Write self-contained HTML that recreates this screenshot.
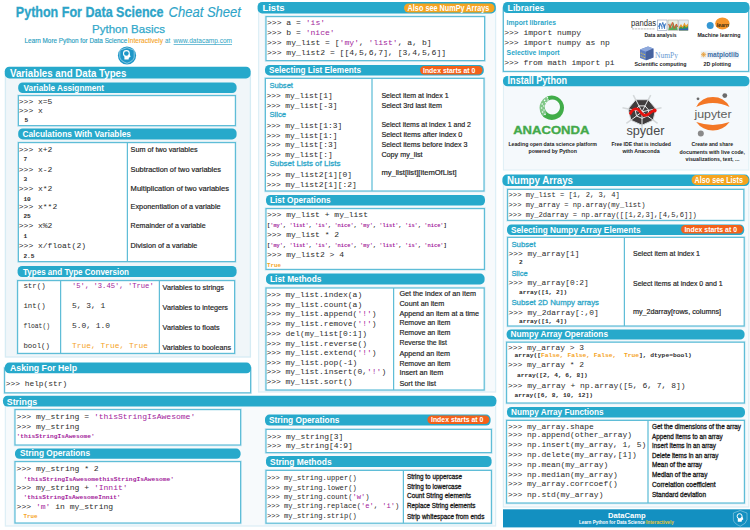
<!DOCTYPE html>
<html lang="en"><head><meta charset="utf-8"><title>Python For Data Science Cheat Sheet - Python Basics</title>
<style>
html,body{margin:0;padding:0;background:#fff;}
body{width:750px;height:530px;overflow:hidden;}
svg{display:block;font-family:"Liberation Sans",Arial,sans-serif;}
svg text{white-space:pre;}
svg .m{font-family:"Liberation Mono","Courier New",monospace;}
</style></head><body>
<svg width="750" height="530" viewBox="0 0 750 530">
<text x="15.8" y="17.2" font-size="15.3" fill="#2da4c8" font-weight="bold" textLength="147.7" lengthAdjust="spacingAndGlyphs" stroke="#2da4c8" stroke-width="0.3">Python For Data Science</text>
<text x="168.5" y="17.2" font-size="15.3" fill="#2da4c8" font-style="italic" textLength="72.5" lengthAdjust="spacingAndGlyphs" stroke="#2da4c8" stroke-width="0.15">Cheat Sheet</text>
<text x="92.0" y="32.7" font-size="11.6" fill="#32a8ca" textLength="73.0" lengthAdjust="spacingAndGlyphs" stroke="#32a8ca" stroke-width="0.25">Python Basics</text>
<text x="24.6" y="43.0" font-size="6.6" fill="#2b9fc2" textLength="102.6" lengthAdjust="spacingAndGlyphs" stroke="#2b9fc2" stroke-width="0.15">Learn More Python for Data Science</text>
<text x="128.0" y="43.0" font-size="6.6" fill="#f5a41f" textLength="35.0" lengthAdjust="spacingAndGlyphs" stroke="#f5a41f" stroke-width="0.1">Interactively</text>
<text x="165.0" y="43.0" font-size="6.6" fill="#2b9fc2" textLength="5.2" lengthAdjust="spacingAndGlyphs">at</text>
<text x="173.6" y="43.0" font-size="6.6" fill="#2b9fc2" textLength="58.4" lengthAdjust="spacingAndGlyphs" text-decoration="underline">www.datacamp.com</text>
<g id="dcicon"><circle cx="127" cy="55.5" r="9.1" fill="#1d97c8"/><path d="M119.8 50.2 L127 47.7 L134.2 50.2 V57.2 Q133.8 61 127 63.3 Q120.2 61 119.8 57.2 Z" fill="none" stroke="#fff" stroke-opacity="0.8" stroke-width="0.6"/><circle cx="126.4" cy="53.5" r="2.9" fill="none" stroke="#fff" stroke-width="1.1"/><path d="M124.4 55.8 L124.4 59.6 L128.6 59.6 L128.9 57.8 L130.6 56.8 L129.4 53.6 L127.6 56.6 Z" fill="#fff"/></g>
<rect x="5.4" y="72.0" width="245.0" height="285.0" fill="#f0f6f9" stroke="#d6ecf4" stroke-width="1.3"/>
<rect x="4.8" y="66.8" width="245.8" height="11.6" fill="#27a9cb" rx="4.5"/>
<text x="10.0" y="76.5" font-size="10.607999999999999" fill="#ffffff" font-weight="bold" textLength="116.4" lengthAdjust="spacingAndGlyphs">Variables and Data Types</text>
<rect x="18.2" y="82.4" width="218.4" height="10.6" fill="#27a9cb" rx="4.5"/>
<text x="23.6" y="90.8" font-size="9.256" fill="#ffffff" font-weight="bold" textLength="80.4" lengthAdjust="spacingAndGlyphs">Variable Assignment</text>
<rect x="18.4" y="95.6" width="217.0" height="30.0" fill="#ffffff" stroke="#d3ecf4" stroke-width="2.6"/>
<rect x="18.4" y="95.6" width="217.0" height="30.0" fill="#ffffff" stroke="#5fbdd7" stroke-width="1.2"/>
<text x="18.8" y="103.5" font-size="8.0" fill="#2b2b2b" class="m" textLength="33.6" lengthAdjust="spacingAndGlyphs">&gt;&gt;&gt; x=5</text>
<text x="18.8" y="112.9" font-size="8.0" fill="#2b2b2b" class="m" textLength="24.0" lengthAdjust="spacingAndGlyphs">&gt;&gt;&gt; x</text>
<text x="24.4" y="122.3" font-size="6.2" fill="#2b2b2b" class="m" font-weight="bold" textLength="3.7" lengthAdjust="spacingAndGlyphs">5</text>
<rect x="18.2" y="128.4" width="218.4" height="11.0" fill="#27a9cb" rx="4.5"/>
<text x="22.4" y="136.8" font-size="9.256" fill="#ffffff" font-weight="bold" textLength="108.6" lengthAdjust="spacingAndGlyphs">Calculations With Variables</text>
<rect x="18.4" y="142.6" width="217.0" height="119.0" fill="#ffffff" stroke="#d3ecf4" stroke-width="2.6"/>
<rect x="18.4" y="142.6" width="217.0" height="119.0" fill="#ffffff" stroke="#5fbdd7" stroke-width="1.2"/>
<line x1="127.4" y1="142.6" x2="127.4" y2="261.6" stroke="#5fbdd7" stroke-width="1.25"/>
<text x="18.8" y="151.7" font-size="8.0" fill="#2b2b2b" class="m" textLength="33.6" lengthAdjust="spacingAndGlyphs">&gt;&gt;&gt; x+2</text>
<text x="23.4" y="161.3" font-size="6.2" fill="#2b2b2b" class="m" font-weight="bold" textLength="3.7" lengthAdjust="spacingAndGlyphs">7</text>
<text x="130.6" y="151.8" font-size="7.3" fill="#1d1d1d" textLength="67.0" lengthAdjust="spacingAndGlyphs" stroke="#1d1d1d" stroke-width="0.18">Sum of two variables</text>
<text x="18.8" y="171.7" font-size="8.0" fill="#2b2b2b" class="m" textLength="33.6" lengthAdjust="spacingAndGlyphs">&gt;&gt;&gt; x-2</text>
<text x="23.4" y="181.3" font-size="6.2" fill="#2b2b2b" class="m" font-weight="bold" textLength="3.7" lengthAdjust="spacingAndGlyphs">3</text>
<text x="130.6" y="171.8" font-size="7.3" fill="#1d1d1d" textLength="90.4" lengthAdjust="spacingAndGlyphs" stroke="#1d1d1d" stroke-width="0.18">Subtraction of two variables</text>
<text x="18.8" y="191.3" font-size="8.0" fill="#2b2b2b" class="m" textLength="33.6" lengthAdjust="spacingAndGlyphs">&gt;&gt;&gt; x*2</text>
<text x="23.4" y="200.9" font-size="6.2" fill="#2b2b2b" class="m" font-weight="bold" textLength="7.4" lengthAdjust="spacingAndGlyphs">10</text>
<text x="130.6" y="191.4" font-size="7.3" fill="#1d1d1d" textLength="98.4" lengthAdjust="spacingAndGlyphs" stroke="#1d1d1d" stroke-width="0.18">Multiplication of two variables</text>
<text x="18.8" y="208.9" font-size="8.0" fill="#2b2b2b" class="m" textLength="38.4" lengthAdjust="spacingAndGlyphs">&gt;&gt;&gt; x**2</text>
<text x="23.4" y="218.3" font-size="6.2" fill="#2b2b2b" class="m" font-weight="bold" textLength="7.4" lengthAdjust="spacingAndGlyphs">25</text>
<text x="130.6" y="208.5" font-size="7.3" fill="#1d1d1d" textLength="90.0" lengthAdjust="spacingAndGlyphs" stroke="#1d1d1d" stroke-width="0.18">Exponentiation of a variable</text>
<text x="18.8" y="228.1" font-size="8.0" fill="#2b2b2b" class="m" textLength="33.6" lengthAdjust="spacingAndGlyphs">&gt;&gt;&gt; x%2</text>
<text x="23.4" y="237.9" font-size="6.2" fill="#2b2b2b" class="m" font-weight="bold" textLength="3.7" lengthAdjust="spacingAndGlyphs">1</text>
<text x="130.6" y="227.7" font-size="7.3" fill="#1d1d1d" textLength="75.0" lengthAdjust="spacingAndGlyphs" stroke="#1d1d1d" stroke-width="0.18">Remainder of a variable</text>
<text x="18.8" y="248.3" font-size="8.0" fill="#2b2b2b" class="m" textLength="67.2" lengthAdjust="spacingAndGlyphs">&gt;&gt;&gt; x/float(2)</text>
<text x="23.4" y="257.9" font-size="6.2" fill="#2b2b2b" class="m" font-weight="bold" textLength="11.1" lengthAdjust="spacingAndGlyphs">2.5</text>
<text x="130.6" y="247.9" font-size="7.3" fill="#1d1d1d" textLength="66.8" lengthAdjust="spacingAndGlyphs" stroke="#1d1d1d" stroke-width="0.18">Division of a variable</text>
<rect x="17.6" y="266.0" width="219.0" height="11.0" fill="#27a9cb" rx="4.5"/>
<text x="23.0" y="274.6" font-size="9.256" fill="#ffffff" font-weight="bold" textLength="106.0" lengthAdjust="spacingAndGlyphs">Types and Type Conversion</text>
<rect x="17.6" y="280.6" width="217.0" height="72.8" fill="#ffffff" stroke="#d3ecf4" stroke-width="2.6"/>
<rect x="17.6" y="280.6" width="217.0" height="72.8" fill="#ffffff" stroke="#5fbdd7" stroke-width="1.2"/>
<line x1="60.6" y1="280.6" x2="60.6" y2="353.4" stroke="#5fbdd7" stroke-width="1.25"/>
<line x1="159.4" y1="280.6" x2="159.4" y2="353.4" stroke="#5fbdd7" stroke-width="1.25"/>
<text x="23.4" y="288.0" font-size="7.6" fill="#2b2b2b" class="m" textLength="22.2" lengthAdjust="spacingAndGlyphs">str()</text>
<text x="72.0" y="288.3" font-size="7.2" fill="#a3239b" class="m" textLength="81.7" lengthAdjust="spacingAndGlyphs">'5', '3.45', 'True'</text>
<text x="162.6" y="290.0" font-size="7.3" fill="#1d1d1d" textLength="61.4" lengthAdjust="spacingAndGlyphs" stroke="#1d1d1d" stroke-width="0.18">Variables to strings</text>
<text x="23.4" y="308.0" font-size="7.6" fill="#2b2b2b" class="m" textLength="22.2" lengthAdjust="spacingAndGlyphs">int()</text>
<text x="72.0" y="308.3" font-size="7.9" fill="#2b2b2b" class="m" textLength="33.2" lengthAdjust="spacingAndGlyphs">5, 3, 1</text>
<text x="162.6" y="310.0" font-size="7.3" fill="#1d1d1d" textLength="65.4" lengthAdjust="spacingAndGlyphs" stroke="#1d1d1d" stroke-width="0.18">Variables to integers</text>
<text x="23.4" y="327.6" font-size="7.6" fill="#2b2b2b" class="m" textLength="26.6" lengthAdjust="spacingAndGlyphs">float()</text>
<text x="72.0" y="327.9" font-size="7.9" fill="#2b2b2b" class="m" textLength="38.0" lengthAdjust="spacingAndGlyphs">5.0, 1.0</text>
<text x="162.6" y="330.0" font-size="7.3" fill="#1d1d1d" textLength="57.0" lengthAdjust="spacingAndGlyphs" stroke="#1d1d1d" stroke-width="0.18">Variables to floats</text>
<text x="23.4" y="347.6" font-size="7.6" fill="#2b2b2b" class="m" textLength="26.6" lengthAdjust="spacingAndGlyphs">bool()</text>
<text x="72.0" y="347.9" font-size="7.9" fill="#f5a41f" class="m" textLength="76.0" lengthAdjust="spacingAndGlyphs">True, True, True</text>
<text x="162.6" y="349.6" font-size="7.3" fill="#1d1d1d" textLength="68.4" lengthAdjust="spacingAndGlyphs" stroke="#1d1d1d" stroke-width="0.18">Variables to booleans</text>
<rect x="4.6" y="368.0" width="246.0" height="24.8" fill="#ffffff" stroke="#d3ecf4" stroke-width="2.6"/>
<rect x="4.6" y="368.0" width="246.0" height="24.8" fill="#ffffff" stroke="#5fbdd7" stroke-width="1.2"/>
<rect x="4.8" y="362.6" width="246.2" height="10.6" fill="#27a9cb" rx="4.5"/>
<text x="10.0" y="371.0" font-size="9.776000000000002" fill="#ffffff" font-weight="bold" textLength="67.0" lengthAdjust="spacingAndGlyphs">Asking For Help</text>
<text x="5.8" y="385.7" font-size="7.9" fill="#2b2b2b" class="m" textLength="61.4" lengthAdjust="spacingAndGlyphs">&gt;&gt;&gt; help(str)</text>
<rect x="5.4" y="401.0" width="490.2" height="125.0" fill="#f7fafc" stroke="#deeff6" stroke-width="1.3"/>
<rect x="3.0" y="395.8" width="493.4" height="10.8" fill="#27a9cb" rx="4.5"/>
<text x="6.8" y="404.9" font-size="9.7" fill="#fff" font-weight="bold" textLength="30.4" lengthAdjust="spacingAndGlyphs">Strings</text>
<rect x="15.0" y="409.6" width="225.6" height="35.4" fill="#ffffff" stroke="#d3ecf4" stroke-width="2.6"/>
<rect x="15.0" y="409.6" width="225.6" height="35.4" fill="#ffffff" stroke="#5fbdd7" stroke-width="1.2"/>
<text x="16.6" y="418.9" font-size="8.0" fill="#2b2b2b" class="m" textLength="72.5" lengthAdjust="spacingAndGlyphs">&gt;&gt;&gt; my_string =</text>
<text x="93.9" y="418.9" font-size="8.0" fill="#a3239b" class="m" textLength="101.4" lengthAdjust="spacingAndGlyphs">'thisStringIsAwesome'</text>
<text x="16.6" y="428.9" font-size="8.0" fill="#2b2b2b" class="m" textLength="62.8" lengthAdjust="spacingAndGlyphs">&gt;&gt;&gt; my_string</text>
<text x="16.6" y="438.3" font-size="6.2" fill="#a3239b" class="m" font-weight="bold" textLength="78.1" lengthAdjust="spacingAndGlyphs">'thisStringIsAwesome'</text>
<rect x="15.0" y="448.6" width="225.6" height="10.2" fill="#27a9cb" rx="4.5"/>
<text x="20.0" y="456.2" font-size="9.256" fill="#ffffff" font-weight="bold" textLength="70.0" lengthAdjust="spacingAndGlyphs">String Operations</text>
<rect x="15.0" y="461.6" width="225.6" height="61.4" fill="#ffffff" stroke="#d3ecf4" stroke-width="2.6"/>
<rect x="15.0" y="461.6" width="225.6" height="61.4" fill="#ffffff" stroke="#5fbdd7" stroke-width="1.2"/>
<text x="16.6" y="470.9" font-size="8.0" fill="#2b2b2b" class="m" textLength="82.1" lengthAdjust="spacingAndGlyphs">&gt;&gt;&gt; my_string * 2</text>
<text x="23.6" y="480.9" font-size="6.2" fill="#a3239b" class="m" font-weight="bold" textLength="150.4" lengthAdjust="spacingAndGlyphs">'thisStringIsAwesomethisStringIsAwesome'</text>
<text x="16.6" y="489.9" font-size="8.0" fill="#2b2b2b" class="m" textLength="72.5" lengthAdjust="spacingAndGlyphs">&gt;&gt;&gt; my_string +</text>
<text x="93.9" y="489.9" font-size="8.0" fill="#a3239b" class="m" textLength="33.8" lengthAdjust="spacingAndGlyphs">'Innit'</text>
<text x="23.6" y="499.3" font-size="6.2" fill="#a3239b" class="m" font-weight="bold" textLength="97.0" lengthAdjust="spacingAndGlyphs">'thisStringIsAwesomeInnit'</text>
<text x="16.6" y="509.3" font-size="8.0" fill="#2b2b2b" class="m" textLength="14.5" lengthAdjust="spacingAndGlyphs">&gt;&gt;&gt;</text>
<text x="35.9" y="509.3" font-size="8.0" fill="#a3239b" class="m" textLength="14.5" lengthAdjust="spacingAndGlyphs">'m'</text>
<text x="55.2" y="509.3" font-size="8.0" fill="#2b2b2b" class="m" textLength="58.0" lengthAdjust="spacingAndGlyphs">in my_string</text>
<text x="23.6" y="518.3" font-size="6" fill="#f5a41f" class="m" font-weight="bold" textLength="14.0" lengthAdjust="spacingAndGlyphs">True</text>
<rect x="258.6" y="8.0" width="237.0" height="384.0" fill="#f7fafc" stroke="#deeff6" stroke-width="1.3"/>
<rect x="257.6" y="2.0" width="238.2" height="11.4" fill="#27a9cb" rx="4.5"/>
<text x="262.4" y="11.4" font-size="9.984" fill="#ffffff" font-weight="bold" textLength="22.2" lengthAdjust="spacingAndGlyphs">Lists</text>
<rect x="404.0" y="3.4" width="90.6" height="9.2" fill="#f5a41f" rx="4.6"/>
<text x="407.6" y="10.8" font-size="8.4" fill="#ffffff" font-weight="bold" textLength="81.8" lengthAdjust="spacingAndGlyphs">Also see NumPy Arrays</text>
<rect x="266.0" y="16.6" width="218.6" height="44.0" fill="#ffffff" stroke="#d3ecf4" stroke-width="2.6"/>
<rect x="266.0" y="16.6" width="218.6" height="44.0" fill="#ffffff" stroke="#5fbdd7" stroke-width="1.2"/>
<text x="267.0" y="24.7" font-size="8.0" fill="#2b2b2b" class="m" textLength="33.9" lengthAdjust="spacingAndGlyphs">&gt;&gt;&gt; a =</text>
<text x="305.7" y="24.7" font-size="8.0" fill="#a3239b" class="m" textLength="19.4" lengthAdjust="spacingAndGlyphs">'is'</text>
<text x="267.0" y="34.7" font-size="8.0" fill="#2b2b2b" class="m" textLength="33.9" lengthAdjust="spacingAndGlyphs">&gt;&gt;&gt; b =</text>
<text x="305.7" y="34.7" font-size="8.0" fill="#a3239b" class="m" textLength="29.0" lengthAdjust="spacingAndGlyphs">'nice'</text>
<text x="267.0" y="45.3" font-size="8.0" fill="#2b2b2b" class="m" textLength="72.6" lengthAdjust="spacingAndGlyphs">&gt;&gt;&gt; my_list = [</text>
<text x="339.6" y="45.3" font-size="8.0" fill="#a3239b" class="m" textLength="19.4" lengthAdjust="spacingAndGlyphs">'my'</text>
<text x="359.0" y="45.3" font-size="8.0" fill="#2b2b2b" class="m" textLength="4.8" lengthAdjust="spacingAndGlyphs">,</text>
<text x="368.6" y="45.3" font-size="8.0" fill="#a3239b" class="m" textLength="29.0" lengthAdjust="spacingAndGlyphs">'list'</text>
<text x="397.7" y="45.3" font-size="8.0" fill="#2b2b2b" class="m" textLength="33.9" lengthAdjust="spacingAndGlyphs">, a, b]</text>
<text x="267.0" y="55.3" font-size="8.0" fill="#2b2b2b" class="m" textLength="179.1" lengthAdjust="spacingAndGlyphs">&gt;&gt;&gt; my_list2 = [[4,5,6,7], [3,4,5,6]]</text>
<rect x="265.0" y="65.0" width="218.8" height="10.4" fill="#27a9cb" rx="4.5"/>
<text x="269.0" y="72.8" font-size="9.256" fill="#ffffff" font-weight="bold" textLength="92.0" lengthAdjust="spacingAndGlyphs">Selecting List Elements</text>
<rect x="420.0" y="66.0" width="62.4" height="8.4" fill="#f4611a" rx="4.200000000000003"/>
<text x="423.0" y="72.6" font-size="7.1" fill="#ffffff" font-weight="bold" textLength="52.4" lengthAdjust="spacingAndGlyphs">Index starts at 0</text>
<rect x="265.4" y="78.4" width="218.6" height="112.6" fill="#ffffff" stroke="#d3ecf4" stroke-width="2.6"/>
<rect x="265.4" y="78.4" width="218.6" height="112.6" fill="#ffffff" stroke="#5fbdd7" stroke-width="1.2"/>
<line x1="372.0" y1="78.4" x2="372.0" y2="191.0" stroke="#5fbdd7" stroke-width="1.25"/>
<text x="269.4" y="87.6" font-size="7.9" fill="#2ba6c8" textLength="23.6" lengthAdjust="spacingAndGlyphs" stroke="#2ba6c8" stroke-width="0.28">Subset</text>
<text x="266.4" y="98.1" font-size="8.0" fill="#2b2b2b" class="m" textLength="66.4" lengthAdjust="spacingAndGlyphs">&gt;&gt;&gt; my_list[1]</text>
<text x="266.4" y="107.9" font-size="8.0" fill="#2b2b2b" class="m" textLength="71.1" lengthAdjust="spacingAndGlyphs">&gt;&gt;&gt; my_list[-3]</text>
<text x="269.4" y="117.4" font-size="7.9" fill="#2ba6c8" textLength="16.6" lengthAdjust="spacingAndGlyphs" stroke="#2ba6c8" stroke-width="0.28">Slice</text>
<text x="266.4" y="127.9" font-size="8.0" fill="#2b2b2b" class="m" textLength="75.8" lengthAdjust="spacingAndGlyphs">&gt;&gt;&gt; my_list[1:3]</text>
<text x="266.4" y="137.7" font-size="8.0" fill="#2b2b2b" class="m" textLength="71.1" lengthAdjust="spacingAndGlyphs">&gt;&gt;&gt; my_list[1:]</text>
<text x="266.4" y="147.3" font-size="8.0" fill="#2b2b2b" class="m" textLength="71.1" lengthAdjust="spacingAndGlyphs">&gt;&gt;&gt; my_list[:3]</text>
<text x="266.4" y="156.9" font-size="8.0" fill="#2b2b2b" class="m" textLength="66.4" lengthAdjust="spacingAndGlyphs">&gt;&gt;&gt; my_list[:]</text>
<text x="269.4" y="166.4" font-size="7.9" fill="#2ba6c8" textLength="71.0" lengthAdjust="spacingAndGlyphs" stroke="#2ba6c8" stroke-width="0.28">Subset Lists of Lists</text>
<text x="266.4" y="176.9" font-size="8.0" fill="#2b2b2b" class="m" textLength="85.7" lengthAdjust="spacingAndGlyphs">&gt;&gt;&gt; my_list2[1][0]</text>
<text x="266.4" y="186.9" font-size="8.0" fill="#2b2b2b" class="m" textLength="90.4" lengthAdjust="spacingAndGlyphs">&gt;&gt;&gt; my_list2[1][:2]</text>
<text x="381.4" y="98.1" font-size="7.3" fill="#1d1d1d" textLength="67.2" lengthAdjust="spacingAndGlyphs" stroke="#1d1d1d" stroke-width="0.18">Select item at index 1</text>
<text x="381.4" y="108.1" font-size="7.3" fill="#1d1d1d" textLength="60.6" lengthAdjust="spacingAndGlyphs" stroke="#1d1d1d" stroke-width="0.18">Select 3rd last item</text>
<text x="381.4" y="126.7" font-size="7.3" fill="#1d1d1d" textLength="89.6" lengthAdjust="spacingAndGlyphs" stroke="#1d1d1d" stroke-width="0.18">Select items at index 1 and 2</text>
<text x="381.4" y="136.7" font-size="7.3" fill="#1d1d1d" textLength="81.0" lengthAdjust="spacingAndGlyphs" stroke="#1d1d1d" stroke-width="0.18">Select items after index 0</text>
<text x="381.4" y="146.7" font-size="7.3" fill="#1d1d1d" textLength="86.0" lengthAdjust="spacingAndGlyphs" stroke="#1d1d1d" stroke-width="0.18">Select items before index 3</text>
<text x="381.4" y="156.7" font-size="7.3" fill="#1d1d1d" textLength="41.2" lengthAdjust="spacingAndGlyphs" stroke="#1d1d1d" stroke-width="0.18">Copy my_list</text>
<text x="381.4" y="175.1" font-size="7.3" fill="#1d1d1d" textLength="75.2" lengthAdjust="spacingAndGlyphs" stroke="#1d1d1d" stroke-width="0.18">my_list[list][itemOfList]</text>
<rect x="266.0" y="195.0" width="219.0" height="10.6" fill="#27a9cb" rx="4.5"/>
<text x="270.0" y="202.8" font-size="9.256" fill="#ffffff" font-weight="bold" textLength="60.6" lengthAdjust="spacingAndGlyphs">List Operations</text>
<rect x="266.0" y="208.6" width="218.4" height="60.8" fill="#ffffff" stroke="#d3ecf4" stroke-width="2.6"/>
<rect x="266.0" y="208.6" width="218.4" height="60.8" fill="#ffffff" stroke="#5fbdd7" stroke-width="1.2"/>
<text x="267.0" y="217.3" font-size="8.0" fill="#2b2b2b" class="m" textLength="101.0" lengthAdjust="spacingAndGlyphs">&gt;&gt;&gt; my_list + my_list</text>
<text x="267.0" y="227.3" font-size="5.3" fill="#2b2b2b" class="m" font-weight="bold" textLength="3.2" lengthAdjust="spacingAndGlyphs">[</text>
<text x="270.2" y="227.3" font-size="5.3" fill="#a3239b" class="m" font-weight="bold" textLength="12.8" lengthAdjust="spacingAndGlyphs">'my'</text>
<text x="283.0" y="227.3" font-size="5.3" fill="#2b2b2b" class="m" font-weight="bold" textLength="3.2" lengthAdjust="spacingAndGlyphs">,</text>
<text x="289.5" y="227.3" font-size="5.3" fill="#a3239b" class="m" font-weight="bold" textLength="19.3" lengthAdjust="spacingAndGlyphs">'list'</text>
<text x="308.7" y="227.3" font-size="5.3" fill="#2b2b2b" class="m" font-weight="bold" textLength="3.2" lengthAdjust="spacingAndGlyphs">,</text>
<text x="315.1" y="227.3" font-size="5.3" fill="#a3239b" class="m" font-weight="bold" textLength="12.8" lengthAdjust="spacingAndGlyphs">'is'</text>
<text x="328.0" y="227.3" font-size="5.3" fill="#2b2b2b" class="m" font-weight="bold" textLength="3.2" lengthAdjust="spacingAndGlyphs">,</text>
<text x="334.4" y="227.3" font-size="5.3" fill="#a3239b" class="m" font-weight="bold" textLength="19.3" lengthAdjust="spacingAndGlyphs">'nice'</text>
<text x="353.7" y="227.3" font-size="5.3" fill="#2b2b2b" class="m" font-weight="bold" textLength="3.2" lengthAdjust="spacingAndGlyphs">,</text>
<text x="360.1" y="227.3" font-size="5.3" fill="#a3239b" class="m" font-weight="bold" textLength="12.8" lengthAdjust="spacingAndGlyphs">'my'</text>
<text x="372.9" y="227.3" font-size="5.3" fill="#2b2b2b" class="m" font-weight="bold" textLength="3.2" lengthAdjust="spacingAndGlyphs">,</text>
<text x="379.3" y="227.3" font-size="5.3" fill="#a3239b" class="m" font-weight="bold" textLength="19.3" lengthAdjust="spacingAndGlyphs">'list'</text>
<text x="398.6" y="227.3" font-size="5.3" fill="#2b2b2b" class="m" font-weight="bold" textLength="3.2" lengthAdjust="spacingAndGlyphs">,</text>
<text x="405.0" y="227.3" font-size="5.3" fill="#a3239b" class="m" font-weight="bold" textLength="12.8" lengthAdjust="spacingAndGlyphs">'is'</text>
<text x="417.9" y="227.3" font-size="5.3" fill="#2b2b2b" class="m" font-weight="bold" textLength="3.2" lengthAdjust="spacingAndGlyphs">,</text>
<text x="424.3" y="227.3" font-size="5.3" fill="#a3239b" class="m" font-weight="bold" textLength="19.3" lengthAdjust="spacingAndGlyphs">'nice'</text>
<text x="443.5" y="227.3" font-size="5.3" fill="#2b2b2b" class="m" font-weight="bold" textLength="3.2" lengthAdjust="spacingAndGlyphs">]</text>
<text x="267.0" y="236.9" font-size="8.0" fill="#2b2b2b" class="m" textLength="72.1" lengthAdjust="spacingAndGlyphs">&gt;&gt;&gt; my_list * 2</text>
<text x="267.0" y="247.3" font-size="5.3" fill="#2b2b2b" class="m" font-weight="bold" textLength="3.2" lengthAdjust="spacingAndGlyphs">[</text>
<text x="270.2" y="247.3" font-size="5.3" fill="#a3239b" class="m" font-weight="bold" textLength="12.8" lengthAdjust="spacingAndGlyphs">'my'</text>
<text x="283.0" y="247.3" font-size="5.3" fill="#2b2b2b" class="m" font-weight="bold" textLength="3.2" lengthAdjust="spacingAndGlyphs">,</text>
<text x="289.5" y="247.3" font-size="5.3" fill="#a3239b" class="m" font-weight="bold" textLength="19.3" lengthAdjust="spacingAndGlyphs">'list'</text>
<text x="308.7" y="247.3" font-size="5.3" fill="#2b2b2b" class="m" font-weight="bold" textLength="3.2" lengthAdjust="spacingAndGlyphs">,</text>
<text x="315.1" y="247.3" font-size="5.3" fill="#a3239b" class="m" font-weight="bold" textLength="12.8" lengthAdjust="spacingAndGlyphs">'is'</text>
<text x="328.0" y="247.3" font-size="5.3" fill="#2b2b2b" class="m" font-weight="bold" textLength="3.2" lengthAdjust="spacingAndGlyphs">,</text>
<text x="334.4" y="247.3" font-size="5.3" fill="#a3239b" class="m" font-weight="bold" textLength="19.3" lengthAdjust="spacingAndGlyphs">'nice'</text>
<text x="353.7" y="247.3" font-size="5.3" fill="#2b2b2b" class="m" font-weight="bold" textLength="3.2" lengthAdjust="spacingAndGlyphs">,</text>
<text x="360.1" y="247.3" font-size="5.3" fill="#a3239b" class="m" font-weight="bold" textLength="12.8" lengthAdjust="spacingAndGlyphs">'my'</text>
<text x="372.9" y="247.3" font-size="5.3" fill="#2b2b2b" class="m" font-weight="bold" textLength="3.2" lengthAdjust="spacingAndGlyphs">,</text>
<text x="379.3" y="247.3" font-size="5.3" fill="#a3239b" class="m" font-weight="bold" textLength="19.3" lengthAdjust="spacingAndGlyphs">'list'</text>
<text x="398.6" y="247.3" font-size="5.3" fill="#2b2b2b" class="m" font-weight="bold" textLength="3.2" lengthAdjust="spacingAndGlyphs">,</text>
<text x="405.0" y="247.3" font-size="5.3" fill="#a3239b" class="m" font-weight="bold" textLength="12.8" lengthAdjust="spacingAndGlyphs">'is'</text>
<text x="417.9" y="247.3" font-size="5.3" fill="#2b2b2b" class="m" font-weight="bold" textLength="3.2" lengthAdjust="spacingAndGlyphs">,</text>
<text x="424.3" y="247.3" font-size="5.3" fill="#a3239b" class="m" font-weight="bold" textLength="19.3" lengthAdjust="spacingAndGlyphs">'nice'</text>
<text x="443.5" y="247.3" font-size="5.3" fill="#2b2b2b" class="m" font-weight="bold" textLength="3.2" lengthAdjust="spacingAndGlyphs">]</text>
<text x="267.0" y="256.9" font-size="8.0" fill="#2b2b2b" class="m" textLength="77.0" lengthAdjust="spacingAndGlyphs">&gt;&gt;&gt; my_list2 &gt; 4</text>
<text x="267.0" y="266.7" font-size="5.8" fill="#f5a41f" class="m" font-weight="bold" textLength="14.0" lengthAdjust="spacingAndGlyphs">True</text>
<rect x="266.0" y="273.6" width="218.6" height="10.8" fill="#27a9cb" rx="4.5"/>
<text x="270.0" y="281.8" font-size="9.256" fill="#ffffff" font-weight="bold" textLength="51.4" lengthAdjust="spacingAndGlyphs">List Methods</text>
<rect x="266.0" y="288.0" width="218.2" height="102.0" fill="#ffffff" stroke="#d3ecf4" stroke-width="2.6"/>
<rect x="266.0" y="288.0" width="218.2" height="102.0" fill="#ffffff" stroke="#5fbdd7" stroke-width="1.2"/>
<line x1="393.6" y1="288.0" x2="393.6" y2="390.0" stroke="#5fbdd7" stroke-width="1.25"/>
<text x="266.4" y="297.3" font-size="8.0" fill="#2b2b2b" class="m" textLength="95.8" lengthAdjust="spacingAndGlyphs">&gt;&gt;&gt; my_list.index(a)</text>
<text x="399.4" y="296.0" font-size="7.3" fill="#1d1d1d" textLength="76.6" lengthAdjust="spacingAndGlyphs" stroke="#1d1d1d" stroke-width="0.18">Get the index of an item</text>
<text x="266.4" y="306.5" font-size="8.0" fill="#2b2b2b" class="m" textLength="95.8" lengthAdjust="spacingAndGlyphs">&gt;&gt;&gt; my_list.count(a)</text>
<text x="399.4" y="306.0" font-size="7.3" fill="#1d1d1d" textLength="45.0" lengthAdjust="spacingAndGlyphs" stroke="#1d1d1d" stroke-width="0.18">Count an item</text>
<text x="266.4" y="316.3" font-size="8.0" fill="#2b2b2b" class="m" textLength="91.0" lengthAdjust="spacingAndGlyphs">&gt;&gt;&gt; my_list.append(</text>
<text x="357.4" y="316.3" font-size="8.0" fill="#a3239b" class="m" textLength="14.4" lengthAdjust="spacingAndGlyphs">'!'</text>
<text x="371.8" y="316.3" font-size="8.0" fill="#2b2b2b" class="m" textLength="4.8" lengthAdjust="spacingAndGlyphs">)</text>
<text x="399.4" y="316.0" font-size="7.3" fill="#1d1d1d" textLength="79.6" lengthAdjust="spacingAndGlyphs" stroke="#1d1d1d" stroke-width="0.18">Append an item at a time</text>
<text x="266.4" y="326.3" font-size="8.0" fill="#2b2b2b" class="m" textLength="91.0" lengthAdjust="spacingAndGlyphs">&gt;&gt;&gt; my_list.remove(</text>
<text x="357.4" y="326.3" font-size="8.0" fill="#a3239b" class="m" textLength="14.4" lengthAdjust="spacingAndGlyphs">'!'</text>
<text x="371.8" y="326.3" font-size="8.0" fill="#2b2b2b" class="m" textLength="4.8" lengthAdjust="spacingAndGlyphs">)</text>
<text x="399.4" y="325.0" font-size="7.3" fill="#1d1d1d" textLength="51.0" lengthAdjust="spacingAndGlyphs" stroke="#1d1d1d" stroke-width="0.18">Remove an item</text>
<text x="266.4" y="335.9" font-size="8.0" fill="#2b2b2b" class="m" textLength="100.6" lengthAdjust="spacingAndGlyphs">&gt;&gt;&gt; del(my_list[0:1])</text>
<text x="399.4" y="334.6" font-size="7.3" fill="#1d1d1d" textLength="51.0" lengthAdjust="spacingAndGlyphs" stroke="#1d1d1d" stroke-width="0.18">Remove an item</text>
<text x="266.4" y="345.5" font-size="8.0" fill="#2b2b2b" class="m" textLength="100.6" lengthAdjust="spacingAndGlyphs">&gt;&gt;&gt; my_list.reverse()</text>
<text x="399.4" y="345.4" font-size="7.3" fill="#1d1d1d" textLength="47.6" lengthAdjust="spacingAndGlyphs" stroke="#1d1d1d" stroke-width="0.18">Reverse the list</text>
<text x="266.4" y="354.9" font-size="8.0" fill="#2b2b2b" class="m" textLength="91.0" lengthAdjust="spacingAndGlyphs">&gt;&gt;&gt; my_list.extend(</text>
<text x="357.4" y="354.9" font-size="8.0" fill="#a3239b" class="m" textLength="14.4" lengthAdjust="spacingAndGlyphs">'!'</text>
<text x="371.8" y="354.9" font-size="8.0" fill="#2b2b2b" class="m" textLength="4.8" lengthAdjust="spacingAndGlyphs">)</text>
<text x="399.4" y="356.0" font-size="7.3" fill="#1d1d1d" textLength="50.6" lengthAdjust="spacingAndGlyphs" stroke="#1d1d1d" stroke-width="0.18">Append an item</text>
<text x="266.4" y="364.7" font-size="8.0" fill="#2b2b2b" class="m" textLength="91.0" lengthAdjust="spacingAndGlyphs">&gt;&gt;&gt; my_list.pop(-1)</text>
<text x="399.4" y="365.8" font-size="7.3" fill="#1d1d1d" textLength="51.0" lengthAdjust="spacingAndGlyphs" stroke="#1d1d1d" stroke-width="0.18">Remove an item</text>
<text x="266.4" y="374.3" font-size="8.0" fill="#2b2b2b" class="m" textLength="100.6" lengthAdjust="spacingAndGlyphs">&gt;&gt;&gt; my_list.insert(0,</text>
<text x="367.0" y="374.3" font-size="8.0" fill="#a3239b" class="m" textLength="14.4" lengthAdjust="spacingAndGlyphs">'!'</text>
<text x="381.4" y="374.3" font-size="8.0" fill="#2b2b2b" class="m" textLength="4.8" lengthAdjust="spacingAndGlyphs">)</text>
<text x="399.4" y="375.0" font-size="7.3" fill="#1d1d1d" textLength="44.0" lengthAdjust="spacingAndGlyphs" stroke="#1d1d1d" stroke-width="0.18">Insert an item</text>
<text x="266.4" y="384.3" font-size="8.0" fill="#2b2b2b" class="m" textLength="86.2" lengthAdjust="spacingAndGlyphs">&gt;&gt;&gt; my_list.sort()</text>
<text x="399.4" y="385.6" font-size="7.3" fill="#1d1d1d" textLength="36.6" lengthAdjust="spacingAndGlyphs" stroke="#1d1d1d" stroke-width="0.18">Sort the list</text>
<rect x="265.0" y="414.6" width="225.6" height="11.0" fill="#27a9cb" rx="4.5"/>
<text x="269.0" y="422.8" font-size="9.256" fill="#ffffff" font-weight="bold" textLength="70.4" lengthAdjust="spacingAndGlyphs">String Operations</text>
<rect x="427.4" y="415.6" width="62.0" height="8.4" fill="#f4611a" rx="4.199999999999989"/>
<text x="431.0" y="422.2" font-size="7.1" fill="#ffffff" font-weight="bold" textLength="52.4" lengthAdjust="spacingAndGlyphs">Index starts at 0</text>
<rect x="266.0" y="429.4" width="225.4" height="23.2" fill="#ffffff" stroke="#d3ecf4" stroke-width="2.6"/>
<rect x="266.0" y="429.4" width="225.4" height="23.2" fill="#ffffff" stroke="#5fbdd7" stroke-width="1.2"/>
<text x="267.0" y="438.7" font-size="8.0" fill="#2b2b2b" class="m" textLength="76.3" lengthAdjust="spacingAndGlyphs">&gt;&gt;&gt; my_string[3]</text>
<text x="267.0" y="448.3" font-size="8.0" fill="#2b2b2b" class="m" textLength="85.9" lengthAdjust="spacingAndGlyphs">&gt;&gt;&gt; my_string[4:9]</text>
<rect x="266.0" y="456.0" width="225.6" height="11.0" fill="#27a9cb" rx="4.5"/>
<text x="270.0" y="464.6" font-size="9.256" fill="#ffffff" font-weight="bold" textLength="61.6" lengthAdjust="spacingAndGlyphs">String Methods</text>
<rect x="266.0" y="470.4" width="225.4" height="52.8" fill="#ffffff" stroke="#d3ecf4" stroke-width="2.6"/>
<rect x="266.0" y="470.4" width="225.4" height="52.8" fill="#ffffff" stroke="#5fbdd7" stroke-width="1.2"/>
<line x1="403.4" y1="470.4" x2="403.4" y2="523.2" stroke="#5fbdd7" stroke-width="1.25"/>
<text x="267.0" y="479.9" font-size="7.1" fill="#2b2b2b" class="m" textLength="89.7" lengthAdjust="spacingAndGlyphs">&gt;&gt;&gt; my_string.upper()</text>
<text x="407.0" y="478.7" font-size="6.7" fill="#1d1d1d" textLength="55.0" lengthAdjust="spacingAndGlyphs" stroke="#1d1d1d" stroke-width="0.3">String to uppercase</text>
<text x="267.0" y="489.7" font-size="7.1" fill="#2b2b2b" class="m" textLength="89.7" lengthAdjust="spacingAndGlyphs">&gt;&gt;&gt; my_string.lower()</text>
<text x="407.0" y="488.7" font-size="6.7" fill="#1d1d1d" textLength="54.4" lengthAdjust="spacingAndGlyphs" stroke="#1d1d1d" stroke-width="0.3">String to lowercase</text>
<text x="267.0" y="498.7" font-size="7.1" fill="#2b2b2b" class="m" textLength="85.4" lengthAdjust="spacingAndGlyphs">&gt;&gt;&gt; my_string.count(</text>
<text x="352.4" y="498.7" font-size="7.1" fill="#a3239b" class="m" textLength="12.8" lengthAdjust="spacingAndGlyphs">'w'</text>
<text x="365.2" y="498.7" font-size="7.1" fill="#2b2b2b" class="m" textLength="4.3" lengthAdjust="spacingAndGlyphs">)</text>
<text x="407.0" y="497.7" font-size="6.7" fill="#1d1d1d" textLength="64.0" lengthAdjust="spacingAndGlyphs" stroke="#1d1d1d" stroke-width="0.3">Count String elements</text>
<text x="267.0" y="508.3" font-size="7.1" fill="#2b2b2b" class="m" textLength="93.9" lengthAdjust="spacingAndGlyphs">&gt;&gt;&gt; my_string.replace(</text>
<text x="360.9" y="508.3" font-size="7.1" fill="#a3239b" class="m" textLength="12.8" lengthAdjust="spacingAndGlyphs">'e'</text>
<text x="373.8" y="508.3" font-size="7.1" fill="#2b2b2b" class="m" textLength="4.3" lengthAdjust="spacingAndGlyphs">,</text>
<text x="382.3" y="508.3" font-size="7.1" fill="#a3239b" class="m" textLength="12.8" lengthAdjust="spacingAndGlyphs">'i'</text>
<text x="395.1" y="508.3" font-size="7.1" fill="#2b2b2b" class="m" textLength="4.3" lengthAdjust="spacingAndGlyphs">)</text>
<text x="407.0" y="508.3" font-size="6.7" fill="#1d1d1d" textLength="68.4" lengthAdjust="spacingAndGlyphs" stroke="#1d1d1d" stroke-width="0.3">Replace String elements</text>
<text x="267.0" y="518.3" font-size="7.1" fill="#2b2b2b" class="m" textLength="89.7" lengthAdjust="spacingAndGlyphs">&gt;&gt;&gt; my_string.strip()</text>
<text x="407.0" y="518.7" font-size="6.7" fill="#1d1d1d" textLength="77.4" lengthAdjust="spacingAndGlyphs" stroke="#1d1d1d" stroke-width="0.3">Strip whitespace from ends</text>
<rect x="503.4" y="8.0" width="245.2" height="63.4" fill="#ffffff" stroke="#d3ecf4" stroke-width="2.6"/>
<rect x="503.4" y="8.0" width="245.2" height="63.4" fill="#ffffff" stroke="#5fbdd7" stroke-width="1.2"/>
<rect x="503.0" y="2.0" width="246.4" height="11.0" fill="#27a9cb" rx="4.5"/>
<text x="507.6" y="10.7" font-size="9.568" fill="#ffffff" font-weight="bold" textLength="36.8" lengthAdjust="spacingAndGlyphs">Libraries</text>
<text x="506.6" y="25.0" font-size="6.8" fill="#2ba6c8" font-weight="bold" textLength="49.4" lengthAdjust="spacingAndGlyphs">Import libraries</text>
<text x="504.2" y="35.3" font-size="8.0" fill="#2b2b2b" class="m" textLength="76.8" lengthAdjust="spacingAndGlyphs">&gt;&gt;&gt; import numpy</text>
<text x="504.2" y="45.3" font-size="8.0" fill="#2b2b2b" class="m" textLength="105.6" lengthAdjust="spacingAndGlyphs">&gt;&gt;&gt; import numpy as np</text>
<text x="506.6" y="54.6" font-size="6.8" fill="#2ba6c8" font-weight="bold" textLength="53.0" lengthAdjust="spacingAndGlyphs">Selective import</text>
<text x="504.2" y="65.3" font-size="8.0" fill="#2b2b2b" class="m" textLength="110.4" lengthAdjust="spacingAndGlyphs">&gt;&gt;&gt; from math import pi</text>
<rect x="657.4" y="20" width="9.6" height="10.4" fill="#fff" stroke="#8a9bb5" stroke-width="0.6"/>
<path d="M658.6 27 L660 23 L661.4 26.4 L662.8 22.4 L664.2 27.6 L665.6 23.4 M659.4 29 V25 M662 29 V26 M664.6 29 V24.4" fill="none" stroke="#2f6fc0" stroke-width="0.9"/>
<rect x="668" y="20" width="10" height="10.4" fill="#e9efe4" stroke="#9aa59a" stroke-width="0.5"/>
<path d="M668.4 30 L670 23 L671.6 28 L673.2 22 L674.8 27 L676.4 23.4 L677.6 30 Z" fill="#5aa85a"/>
<path d="M668.6 24 L670.4 28 L672.4 22.4 L674.4 28.4 L676.4 24 L677.6 27" fill="none" stroke="#d8542e" stroke-width="1"/>
<rect x="678.8" y="20" width="9.4" height="10.4" fill="#e4ecf2" stroke="#9aa5aa" stroke-width="0.5"/>
<path d="M679 30.2 L679 27 L681 24 L682.6 26.4 L684.4 22.6 L686 25.4 L688 23.4 L688 30.2 Z" fill="#e79a2c"/>
<path d="M679 30.2 L679 28.4 L681 26.4 L682.6 28 L684.4 25.6 L686 27.6 L688 26 L688 30.2 Z" fill="#3c9a4a"/>
<path d="M679 30.2 L679 29.4 L681 28.4 L684 28.8 L688 28 L688 30.2 Z" fill="#2e66b4"/>
<line x1="632" y1="28.9" x2="655" y2="28.9" stroke="#a8a8a8" stroke-width="0.8" stroke-dasharray="2.2 0.7"/>
<ellipse cx="722.4" cy="23.6" rx="7.2" ry="6" fill="#f5952a"/>
<circle cx="710.2" cy="25.6" r="3.5" fill="#3597d3"/>
<path d="M640 49.6 L648 46.6 L653.4 48.6 L653.4 57.4 L646 60.2 L640 58 Z" fill="#5d7fc4"/>
<path d="M640 49.6 L646 51.8 L653.4 48.6 L648 46.6 Z" fill="#8fa9dc"/>
<path d="M646 51.8 L646 60.2 L653.4 57.4 L653.4 48.6 Z" fill="#46629f"/>
<path d="M641.2 52.6 v1.2 M641.2 55.6 v1.2 M643 53.4 v1.2 M643 56.4 v1.2 M644.6 54 v1.2 M644.6 57 v1.2" stroke="#e8c84a" stroke-width="0.9"/>
<rect x="700.6" y="50.6" width="38.6" height="8" fill="#eef3f8"/>
<circle cx="703.6" cy="54.6" r="2.6" fill="#f3e3c0"/><path d="M703.6 52 V57.2 M701 54.6 H706.2 M701.8 52.8 L705.4 56.4 M705.4 52.8 L701.8 56.4" stroke="#e0922e" stroke-width="0.6"/>
<text x="631.0" y="26.2" font-size="8.4" fill="#2a2a2a" textLength="25.0" lengthAdjust="spacingAndGlyphs">pandas</text>
<text x="716.6" y="26.6" font-size="5" fill="#3a2a10" font-weight="bold" font-style="italic" textLength="12.4" lengthAdjust="spacingAndGlyphs">learn</text>
<text x="644.4" y="36.6" font-size="5.6" fill="#222" font-weight="bold" textLength="32.2" lengthAdjust="spacingAndGlyphs">Data analysis</text>
<text x="697.4" y="36.6" font-size="5.6" fill="#222" font-weight="bold" textLength="43.2" lengthAdjust="spacingAndGlyphs">Machine learning</text>
<text x="634.6" y="66.4" font-size="5.6" fill="#222" font-weight="bold" textLength="51.8" lengthAdjust="spacingAndGlyphs">Scientific computing</text>
<text x="703.6" y="66.4" font-size="5.6" fill="#222" font-weight="bold" textLength="27.4" lengthAdjust="spacingAndGlyphs">2D plotting</text>
<text x="655.0" y="57.6" font-size="7.4" fill="#6c9bd2" font-family="Liberation Serif, serif" textLength="23.0" lengthAdjust="spacingAndGlyphs">NumPy</text>
<text x="707.2" y="57.0" font-size="7.6" fill="#3d6fa5" font-weight="bold" textLength="31.6" lengthAdjust="spacingAndGlyphs">matplotlib</text>
<rect x="503.4" y="82.0" width="245.4" height="88.0" fill="#f5f9fc" stroke="#deeff6" stroke-width="1"/>
<rect x="503.0" y="76.0" width="246.4" height="10.2" fill="#27a9cb" rx="4.5"/>
<text x="507.6" y="84.4" font-size="10.088" fill="#ffffff" font-weight="bold" textLength="59.4" lengthAdjust="spacingAndGlyphs">Install Python</text>
<path fill-rule="evenodd" fill="#41ad49" d="M551.8 95.6 a12.2 12.2 0 1 0 0.01 0 Z M552.4 99.4 a7.6 7.6 0 1 1 -0.01 0 Z"/>
<path d="M539 102 L546.4 96.4 L549 99.6 L545.4 104 L544.8 109 L546.6 113.4 L543 116 L539.6 110 Z" fill="#f5f9fc" opacity="0.35"/>
<g fill="#f5f9fc"><circle cx="542.2" cy="104" r="0.8"/><circle cx="541.6" cy="108" r="0.8"/><circle cx="542.6" cy="112" r="0.8"/><circle cx="544.6" cy="100.4" r="0.8"/><circle cx="547.4" cy="97.8" r="0.8"/><circle cx="543.8" cy="106" r="0.7"/><circle cx="544" cy="110" r="0.7"/><circle cx="545.6" cy="102.6" r="0.7"/><circle cx="548" cy="100" r="0.7"/><circle cx="545" cy="114.4" r="0.8"/></g>
<g stroke="#d4d8da" stroke-width="1.5"><line x1="642" y1="111.8" x2="650.7" y2="95.1"/><line x1="642" y1="111.8" x2="661.5" y2="107.7"/><line x1="642" y1="111.8" x2="657.6" y2="123.3"/><line x1="642" y1="111.8" x2="642.0" y2="130.3"/><line x1="642" y1="111.8" x2="626.4" y2="123.3"/><line x1="642" y1="111.8" x2="622.5" y2="107.7"/><line x1="642" y1="111.8" x2="633.3" y2="95.1"/></g>
<polygon points="648.2,99.7 655.8,108.8 653.1,120.2 642.0,125.2 630.9,120.2 628.2,108.8 635.8,99.7" fill="#403c3d" stroke="#d4d8da" stroke-width="1"/>
<g stroke="#e8eaeb" stroke-width="1"><line x1="642" y1="111.8" x2="648.2" y2="99.7"/><line x1="642" y1="111.8" x2="655.8" y2="108.8"/><line x1="642" y1="111.8" x2="653.1" y2="120.2"/><line x1="642" y1="111.8" x2="642.0" y2="125.2"/><line x1="642" y1="111.8" x2="630.9" y2="120.2"/><line x1="642" y1="111.8" x2="628.2" y2="108.8"/><line x1="642" y1="111.8" x2="635.8" y2="99.7"/></g>
<polygon points="645.0,105.9 648.8,110.3 647.5,115.9 642.0,118.4 636.5,115.9 635.2,110.3 639.0,105.9" fill="none" stroke="#e8eaeb" stroke-width="1"/>
<path d="M630.4 113.4 C632.6 108.4 637 107.6 639.4 110.6 C641.8 113.8 643.6 116.4 647.4 114.8 C650.6 113.4 651.6 110.6 654.4 110.4" fill="none" stroke="#e8130f" stroke-width="2.7" stroke-linecap="round"/>
<circle cx="654.6" cy="110.4" r="2" fill="#e8130f"/>
<path d="M696.2 106.9 A19.1 19.1 0 0 1 729.6 106.9 A39.3 39.3 0 0 0 696.2 106.9 Z" fill="#f37726"/>
<path d="M696.2 122 A20.7 20.7 0 0 0 729.6 122 A50.9 50.9 0 0 1 696.2 122 Z" fill="#f37726"/>
<circle cx="698" cy="98.8" r="1.4" fill="#6b6b6b"/><circle cx="724.8" cy="95.6" r="2.4" fill="#6b6b6b"/><circle cx="700.8" cy="133.6" r="3" fill="#8a8a8a"/>
<text x="513.2" y="134.4" font-size="11.8" fill="#43a94a" font-weight="bold" textLength="76.2" lengthAdjust="spacingAndGlyphs" stroke="#43a94a" stroke-width="0.35">ANACONDA</text>
<text x="626.4" y="134.8" font-size="13" fill="#4a4a4a" textLength="38.0" lengthAdjust="spacingAndGlyphs">spyder</text>
<text x="694.4" y="118.0" font-size="11.4" fill="#5e5e5e" textLength="37.2" lengthAdjust="spacingAndGlyphs">jupyter</text>
<text x="508.4" y="146.4" font-size="5.5" fill="#222" font-weight="bold" textLength="88.6" lengthAdjust="spacingAndGlyphs">Leading open data science platform</text>
<text x="528.6" y="153.4" font-size="5.5" fill="#222" font-weight="bold" textLength="48.4" lengthAdjust="spacingAndGlyphs">powered by Python</text>
<text x="611.4" y="146.4" font-size="5.5" fill="#222" font-weight="bold" textLength="59.6" lengthAdjust="spacingAndGlyphs">Free IDE that is included</text>
<text x="622.4" y="153.4" font-size="5.5" fill="#222" font-weight="bold" textLength="37.2" lengthAdjust="spacingAndGlyphs">with Anaconda</text>
<text x="691.6" y="146.4" font-size="5.5" fill="#222" font-weight="bold" textLength="41.4" lengthAdjust="spacingAndGlyphs">Create and share</text>
<text x="679.6" y="154.0" font-size="5.5" fill="#222" font-weight="bold" textLength="65.4" lengthAdjust="spacingAndGlyphs">documents with live code,</text>
<text x="685.6" y="161.0" font-size="5.5" fill="#222" font-weight="bold" textLength="53.8" lengthAdjust="spacingAndGlyphs">visualizations, text, ...</text>
<rect x="503.4" y="180.0" width="245.4" height="327.0" fill="#f7fafc" stroke="#deeff6" stroke-width="1.3"/>
<rect x="502.4" y="174.6" width="247.0" height="11.4" fill="#27a9cb" rx="4.5"/>
<text x="507.0" y="184.0" font-size="10.192000000000002" fill="#ffffff" font-weight="bold" textLength="66.0" lengthAdjust="spacingAndGlyphs">Numpy Arrays</text>
<rect x="691.6" y="175.0" width="57.0" height="10.0" fill="#f5a41f" rx="5.0"/>
<text x="694.6" y="183.2" font-size="8.4" fill="#ffffff" font-weight="bold" textLength="48.4" lengthAdjust="spacingAndGlyphs">Also see Lists</text>
<rect x="507.6" y="189.4" width="236.2" height="31.0" fill="#ffffff" stroke="#d3ecf4" stroke-width="2.6"/>
<rect x="507.6" y="189.4" width="236.2" height="31.0" fill="#ffffff" stroke="#5fbdd7" stroke-width="1.2"/>
<text x="508.6" y="197.3" font-size="7.1" fill="#2b2b2b" class="m" textLength="111.3" lengthAdjust="spacingAndGlyphs">&gt;&gt;&gt; my_list = [1, 2, 3, 4]</text>
<text x="508.6" y="206.9" font-size="7.1" fill="#2b2b2b" class="m" textLength="137.0" lengthAdjust="spacingAndGlyphs">&gt;&gt;&gt; my_array = np.array(my_list)</text>
<text x="508.6" y="216.7" font-size="7.1" fill="#2b2b2b" class="m" textLength="188.3" lengthAdjust="spacingAndGlyphs">&gt;&gt;&gt; my_2darray = np.array([[1,2,3],[4,5,6]])</text>
<rect x="507.0" y="224.4" width="237.2" height="10.6" fill="#27a9cb" rx="4.5"/>
<text x="511.0" y="232.6" font-size="9.256" fill="#ffffff" font-weight="bold" textLength="129.6" lengthAdjust="spacingAndGlyphs">Selecting Numpy Array Elements</text>
<rect x="681.0" y="225.0" width="62.0" height="8.6" fill="#f4611a" rx="4.299999999999997"/>
<text x="684.4" y="231.6" font-size="7.1" fill="#ffffff" font-weight="bold" textLength="52.6" lengthAdjust="spacingAndGlyphs">Index starts at 0</text>
<rect x="507.6" y="237.4" width="236.6" height="88.6" fill="#ffffff" stroke="#d3ecf4" stroke-width="2.6"/>
<rect x="507.6" y="237.4" width="236.6" height="88.6" fill="#ffffff" stroke="#5fbdd7" stroke-width="1.2"/>
<line x1="624.4" y1="237.4" x2="624.4" y2="326.0" stroke="#5fbdd7" stroke-width="1.25"/>
<text x="511.4" y="246.6" font-size="7.9" fill="#2ba6c8" textLength="24.2" lengthAdjust="spacingAndGlyphs" stroke="#2ba6c8" stroke-width="0.28">Subset</text>
<text x="508.6" y="256.3" font-size="8.0" fill="#2b2b2b" class="m" textLength="70.8" lengthAdjust="spacingAndGlyphs">&gt;&gt;&gt; my_array[1]</text>
<text x="519.0" y="264.1" font-size="6" fill="#2b2b2b" class="m" font-weight="bold" textLength="3.7" lengthAdjust="spacingAndGlyphs">2</text>
<text x="511.4" y="275.6" font-size="7.9" fill="#2ba6c8" textLength="16.2" lengthAdjust="spacingAndGlyphs" stroke="#2ba6c8" stroke-width="0.28">Slice</text>
<text x="508.6" y="284.9" font-size="8.0" fill="#2b2b2b" class="m" textLength="80.2" lengthAdjust="spacingAndGlyphs">&gt;&gt;&gt; my_array[0:2]</text>
<text x="519.0" y="293.9" font-size="6" fill="#2b2b2b" class="m" font-weight="bold" textLength="48.1" lengthAdjust="spacingAndGlyphs">array([1, 2])</text>
<text x="511.4" y="305.0" font-size="7.9" fill="#2ba6c8" textLength="87.6" lengthAdjust="spacingAndGlyphs" stroke="#2ba6c8" stroke-width="0.28">Subset 2D Numpy arrays</text>
<text x="508.6" y="314.7" font-size="8.0" fill="#2b2b2b" class="m" textLength="90.1" lengthAdjust="spacingAndGlyphs">&gt;&gt;&gt; my_2darray[:,0]</text>
<text x="519.0" y="323.3" font-size="6" fill="#2b2b2b" class="m" font-weight="bold" textLength="48.1" lengthAdjust="spacingAndGlyphs">array([1, 4])</text>
<text x="633.0" y="256.0" font-size="7.3" fill="#1d1d1d" textLength="67.0" lengthAdjust="spacingAndGlyphs" stroke="#1d1d1d" stroke-width="0.18">Select item at index 1</text>
<text x="633.0" y="286.2" font-size="7.3" fill="#1d1d1d" textLength="89.6" lengthAdjust="spacingAndGlyphs" stroke="#1d1d1d" stroke-width="0.18">Select items at index 0 and 1</text>
<text x="633.0" y="314.2" font-size="7.3" fill="#1d1d1d" textLength="88.0" lengthAdjust="spacingAndGlyphs" stroke="#1d1d1d" stroke-width="0.18">my_2darray[rows, columns]</text>
<rect x="506.6" y="329.4" width="238.0" height="10.2" fill="#27a9cb" rx="4.5"/>
<text x="510.6" y="337.4" font-size="9.256" fill="#ffffff" font-weight="bold" textLength="97.4" lengthAdjust="spacingAndGlyphs">Numpy Array Operations</text>
<rect x="506.6" y="342.2" width="237.8" height="60.8" fill="#ffffff" stroke="#d3ecf4" stroke-width="2.6"/>
<rect x="506.6" y="342.2" width="237.8" height="60.8" fill="#ffffff" stroke="#5fbdd7" stroke-width="1.2"/>
<text x="508.0" y="350.3" font-size="8.0" fill="#2b2b2b" class="m" textLength="76.0" lengthAdjust="spacingAndGlyphs">&gt;&gt;&gt; my_array &gt; 3</text>
<text x="514.6" y="357.3" font-size="6" fill="#2b2b2b" class="m" font-weight="bold" textLength="26.4" lengthAdjust="spacingAndGlyphs">array([</text>
<text x="541.0" y="357.3" font-size="6" fill="#f5a41f" class="m" font-weight="bold" textLength="98.0" lengthAdjust="spacingAndGlyphs">False, False, False,  True</text>
<text x="639.0" y="357.3" font-size="6" fill="#2b2b2b" class="m" font-weight="bold" textLength="52.8" lengthAdjust="spacingAndGlyphs">], dtype=bool)</text>
<text x="508.0" y="367.3" font-size="8.0" fill="#2b2b2b" class="m" textLength="76.0" lengthAdjust="spacingAndGlyphs">&gt;&gt;&gt; my_array * 2</text>
<text x="517.0" y="377.3" font-size="6" fill="#2b2b2b" class="m" font-weight="bold" textLength="70.7" lengthAdjust="spacingAndGlyphs">array([2, 4, 6, 8])</text>
<text x="508.0" y="388.3" font-size="8.0" fill="#2b2b2b" class="m" textLength="177.6" lengthAdjust="spacingAndGlyphs">&gt;&gt;&gt; my_array + np.array([5, 6, 7, 8])</text>
<text x="514.6" y="397.3" font-size="6" fill="#2b2b2b" class="m" font-weight="bold" textLength="78.3" lengthAdjust="spacingAndGlyphs">array([6, 8, 10, 12])</text>
<rect x="507.0" y="407.0" width="238.0" height="10.6" fill="#27a9cb" rx="4.5"/>
<text x="511.0" y="415.2" font-size="9.256" fill="#ffffff" font-weight="bold" textLength="92.6" lengthAdjust="spacingAndGlyphs">Numpy Array Functions</text>
<rect x="506.6" y="420.4" width="237.8" height="82.6" fill="#ffffff" stroke="#d3ecf4" stroke-width="2.6"/>
<rect x="506.6" y="420.4" width="237.8" height="82.6" fill="#ffffff" stroke="#5fbdd7" stroke-width="1.2"/>
<line x1="648.0" y1="420.4" x2="648.0" y2="503.0" stroke="#5fbdd7" stroke-width="1.25"/>
<text x="508.0" y="428.5" font-size="8.0" fill="#2b2b2b" class="m" textLength="85.9" lengthAdjust="spacingAndGlyphs">&gt;&gt;&gt; my_array.shape</text>
<text x="652.0" y="428.9" font-size="6.7" fill="#1d1d1d" textLength="89.0" lengthAdjust="spacingAndGlyphs" stroke="#1d1d1d" stroke-width="0.3">Get the dimensions of the array</text>
<text x="508.0" y="437.3" font-size="8.0" fill="#2b2b2b" class="m" textLength="124.0" lengthAdjust="spacingAndGlyphs">&gt;&gt;&gt; np.append(other_array)</text>
<text x="652.0" y="438.5" font-size="6.7" fill="#1d1d1d" textLength="70.6" lengthAdjust="spacingAndGlyphs" stroke="#1d1d1d" stroke-width="0.3">Append items to an array</text>
<text x="508.0" y="447.3" font-size="8.0" fill="#2b2b2b" class="m" textLength="138.3" lengthAdjust="spacingAndGlyphs">&gt;&gt;&gt; np.insert(my_array, 1, 5)</text>
<text x="652.0" y="447.5" font-size="6.7" fill="#1d1d1d" textLength="64.0" lengthAdjust="spacingAndGlyphs" stroke="#1d1d1d" stroke-width="0.3">Insert items in an array</text>
<text x="508.0" y="457.3" font-size="8.0" fill="#2b2b2b" class="m" textLength="128.8" lengthAdjust="spacingAndGlyphs">&gt;&gt;&gt; np.delete(my_array,[1])</text>
<text x="652.0" y="457.5" font-size="6.7" fill="#1d1d1d" textLength="66.4" lengthAdjust="spacingAndGlyphs" stroke="#1d1d1d" stroke-width="0.3">Delete items in an array</text>
<text x="508.0" y="466.9" font-size="8.0" fill="#2b2b2b" class="m" textLength="100.2" lengthAdjust="spacingAndGlyphs">&gt;&gt;&gt; np.mean(my_array)</text>
<text x="652.0" y="466.9" font-size="6.7" fill="#1d1d1d" textLength="50.0" lengthAdjust="spacingAndGlyphs" stroke="#1d1d1d" stroke-width="0.3">Mean of the array</text>
<text x="508.0" y="476.7" font-size="8.0" fill="#2b2b2b" class="m" textLength="109.7" lengthAdjust="spacingAndGlyphs">&gt;&gt;&gt; np.median(my_array)</text>
<text x="652.0" y="476.5" font-size="6.7" fill="#1d1d1d" textLength="55.4" lengthAdjust="spacingAndGlyphs" stroke="#1d1d1d" stroke-width="0.3">Median of the array</text>
<text x="508.0" y="486.3" font-size="8.0" fill="#2b2b2b" class="m" textLength="109.7" lengthAdjust="spacingAndGlyphs">&gt;&gt;&gt; my_array.corrcoef()</text>
<text x="652.0" y="487.1" font-size="6.7" fill="#1d1d1d" textLength="63.6" lengthAdjust="spacingAndGlyphs" stroke="#1d1d1d" stroke-width="0.3">Correlation coefficient</text>
<text x="508.0" y="496.7" font-size="8.0" fill="#2b2b2b" class="m" textLength="95.4" lengthAdjust="spacingAndGlyphs">&gt;&gt;&gt; np.std(my_array)</text>
<text x="652.0" y="497.1" font-size="6.7" fill="#1d1d1d" textLength="54.0" lengthAdjust="spacingAndGlyphs" stroke="#1d1d1d" stroke-width="0.3">Standard deviation</text>
<rect x="503.0" y="509.3" width="247.0" height="18.1" fill="#1390c1"/>
<text x="608.0" y="517.6" font-size="7.6" fill="#fff" font-weight="bold" textLength="37.6" lengthAdjust="spacingAndGlyphs">DataCamp</text>
<text x="579.0" y="524.0" font-size="4.6" fill="#fff" font-weight="bold" textLength="66.0" lengthAdjust="spacingAndGlyphs">Learn Python for Data Science</text>
<text x="646.0" y="524.0" font-size="4.6" fill="#e8c634" font-weight="bold" textLength="28.0" lengthAdjust="spacingAndGlyphs">Interactively</text>
<g id="shield"><path d="M733.4 513 L740.2 510.5 L747 513 V519.6 Q746.6 523.6 740.2 526.2 Q733.8 523.6 733.4 519.6 Z" fill="none" stroke="#fff" stroke-opacity="0.5" stroke-width="0.7"/><circle cx="739.6" cy="516.2" r="2.5" fill="none" stroke="#fff" stroke-width="1"/><path d="M737.8 518.2 L737.8 521.8 L741.6 521.8 L741.9 520.2 L743.4 519.3 L742.4 516.4 L740.6 519 Z" fill="#fff"/></g>
</svg>
</body></html>
